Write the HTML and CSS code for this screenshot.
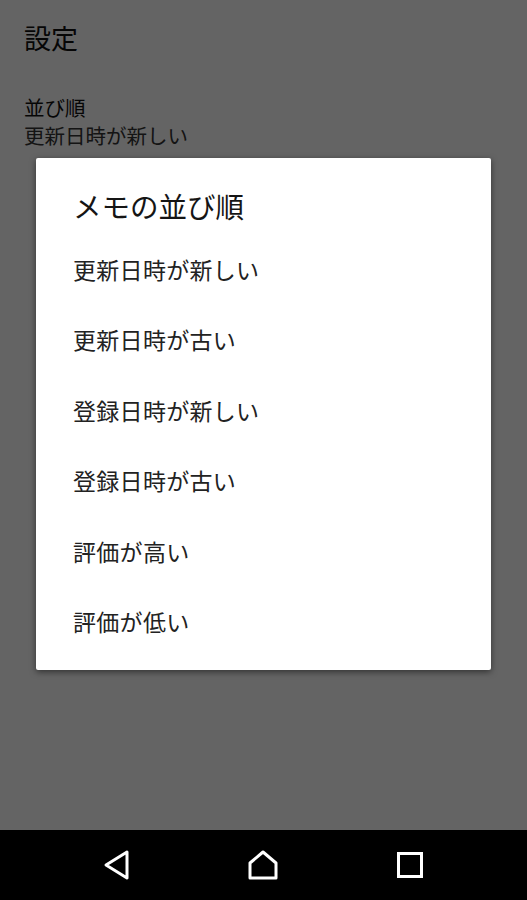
FILE: index.html
```html
<!DOCTYPE html>
<html lang="ja">
<head>
    <meta charset="UTF-8">
    <title>設定</title>
    <link rel="stylesheet" href="styles.css">
</head>
<body>
<div class="screen">
    <div class="page">
        <h1 class="page-title">設定</h1>
        <div class="pref">
            <div class="pref-title">並び順</div>
            <div class="pref-summary">更新日時が新しい</div>
        </div>
        <div class="scrim"></div>
        <div class="dialog">
            <h2 class="dialog-title">メモの並び順</h2>
            <ul class="dialog-list">
                <li>更新日時が新しい</li>
                <li>更新日時が古い</li>
                <li>登録日時が新しい</li>
                <li>登録日時が古い</li>
                <li>評価が高い</li>
                <li>評価が低い</li>
            </ul>
        </div>
    </div>
    <div class="navbar">
        <div class="nav-btn">
            <svg width="28" height="32" viewBox="0 0 28 32"><path d="M24 3 L3 16 L24 29 Z" fill="none" stroke="#fff" stroke-width="3" stroke-linejoin="round"/></svg>
        </div>
        <div class="nav-btn">
            <svg width="32" height="32" viewBox="0 0 32 32"><path d="M16 3 L29 14 L29 29 L3 29 L3 14 Z" fill="none" stroke="#fff" stroke-width="3" stroke-linejoin="round"/></svg>
        </div>
        <div class="nav-btn">
            <svg width="28" height="28" viewBox="0 0 28 28"><rect x="2.5" y="2.5" width="23" height="23" fill="none" stroke="#fff" stroke-width="3"/></svg>
        </div>
    </div>
</div>
</body>
</html>
```

FILE: styles.css
```css
body { margin: 0; font-family: "Noto Sans CJK JP", "Noto Sans", sans-serif; background: #000; }

.screen { width: 527px; height: 900px; display: flex; flex-direction: column; }
.page { position: relative; flex: 1; background: #fafafa; color: #111; padding: 20px 24px 0; }
.page-title { margin: 0; font-size: 27px; font-weight: 400; line-height: 36px; }
.pref { margin-top: 37px; }
.pref-title, .pref-summary { font-size: 20.5px; line-height: 28px; }
.pref-summary { color: #333; }

.scrim { position: absolute; top: 0; left: 0; right: 0; bottom: 0; background: rgba(0, 0, 0, 0.6); }
.dialog { position: absolute; top: 158px; left: 36px; width: 455px; height: 512px; box-sizing: border-box; background: #fff; border-radius: 2px; box-shadow: 0 2px 6px rgba(0, 0, 0, 0.5); padding: 0 37px 13px; }
.dialog-title { margin: 0; padding: 29px 0 9px; font-size: 28.5px; font-weight: 400; line-height: 38px; color: #151515; }
.dialog-list { list-style-type: none; margin: 0; padding: 0; }
.dialog-list > li { height: 70.4px; line-height: 70.4px; font-size: 23px; letter-spacing: 0.3px; color: #222; }

.navbar { height: 70px; background: #000; display: grid; grid-template-columns: repeat(3, 1fr); padding: 0 44px; align-items: center; }
.nav-btn { display: flex; justify-content: center; align-items: center; }
.nav-btn svg { display: block; }
```
